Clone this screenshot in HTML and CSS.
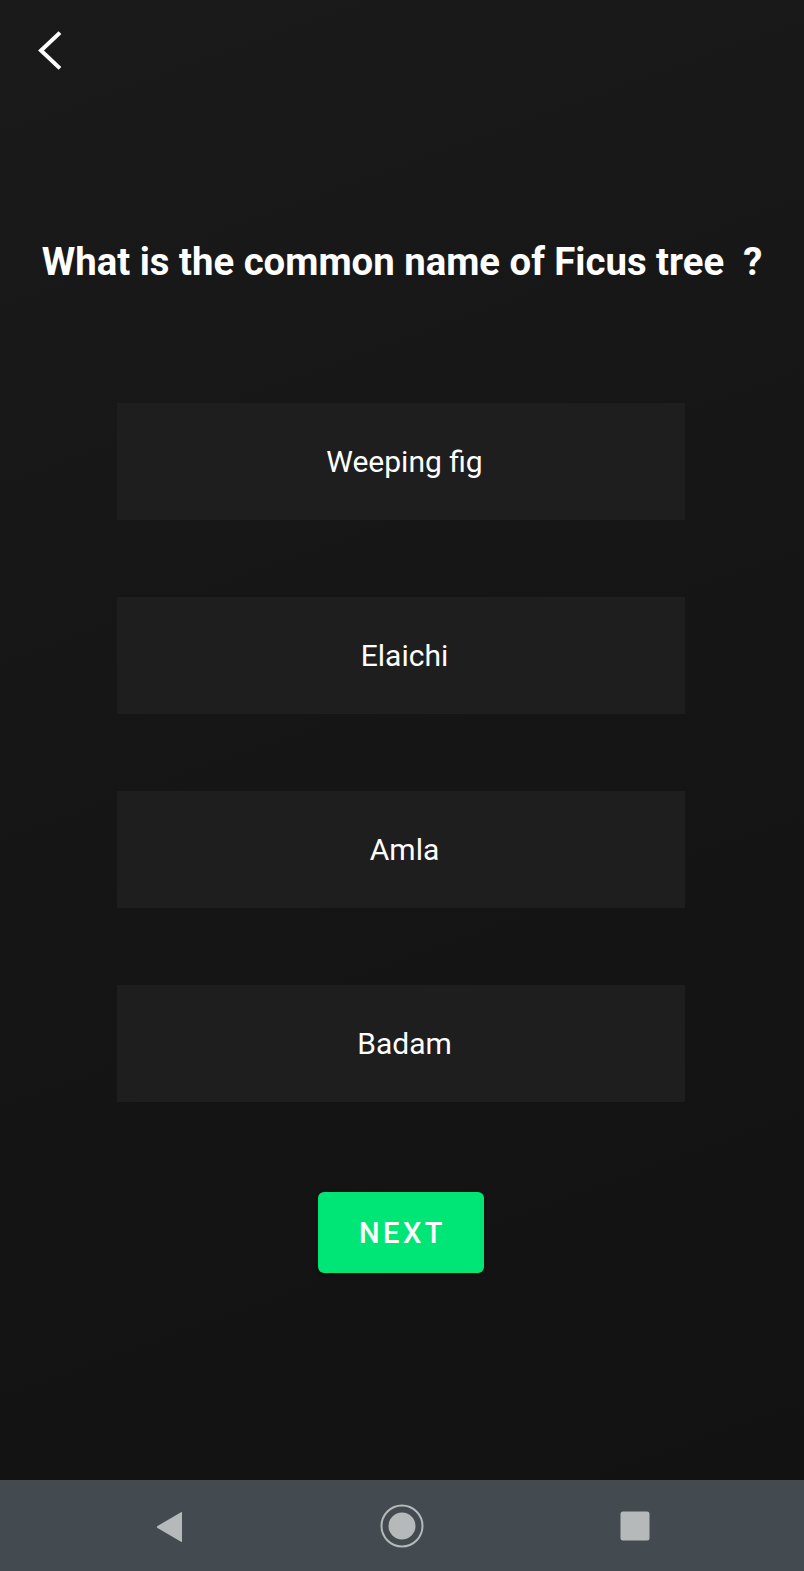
FILE: index.html
```html
<!DOCTYPE html>
<html>
<head>
<meta charset="utf-8">
<link rel="stylesheet" href="styles.css">
</head>
<body>
<div class="screen">
  <main class="content">
    <header class="topbar">
      <button class="back" aria-label="Back">
        <svg width="30" height="44" viewBox="0 0 30 44"><polyline points="20.5,4 3,20.5 20.5,37" fill="none" stroke="#fff" stroke-width="4" stroke-linecap="square" stroke-linejoin="miter"/></svg>
      </button>
    </header>
    <h1 class="question">What is the common name of Ficus tree&nbsp; ?</h1>
    <div class="options">
      <div class="option">Weeping fig</div>
      <div class="option">Elaichi</div>
      <div class="option">Amla</div>
      <div class="option">Badam</div>
    </div>
    <div class="actions">
      <button class="next">NEXT</button>
    </div>
  </main>
  <nav class="navbar">
    <svg class="nav-icon" width="30" height="32" viewBox="0 0 30 32"><path d="M27 1.5 L27 30.5 Q27 31.5 26 30.8 L2.5 17 Q1.2 16 2.5 15 L26 1.2 Q27 0.6 27 1.5 Z" fill="#b5b9ba"/></svg>
    <svg class="nav-icon" width="44" height="44" viewBox="0 0 44 44"><circle cx="22" cy="22" r="20.5" fill="none" stroke="#b5b9ba" stroke-width="2"/><circle cx="22" cy="22" r="13.5" fill="#b5b9ba"/></svg>
    <svg class="nav-icon" width="30" height="30" viewBox="0 0 30 30"><rect x="0.5" y="0.5" width="29" height="29" rx="2.5" fill="#b5b9ba"/></svg>
  </nav>
</div>
</body>
</html>
```

FILE: styles.css
```css
html, body {
  margin: 0;
  padding: 0;
}
body {
  width: 804px;
  height: 1571px;
  overflow: hidden;
  font-family: Roboto, "Liberation Sans", sans-serif;
  background: #161616;
}
.screen {
  display: flex;
  flex-direction: column;
  height: 1571px;
}
.content {
  flex: 1;
  display: flex;
  flex-direction: column;
  background: linear-gradient(160deg, #1a1a1a 0%, #151515 50%, #121212 100%);
}
.topbar {
  height: 104px;
  padding: 30px 0 0 38px;
  box-sizing: border-box;
}
.back {
  background: none;
  border: 0;
  padding: 0;
  margin: 0;
  display: block;
  cursor: pointer;
}
.question {
  margin: 136px 0 0 0;
  text-align: center;
  color: #fff;
  font-weight: 700;
  font-size: 38.3px;
  line-height: 44px;
  letter-spacing: 0;
}
.options {
  margin: 119px 0 0 117px;
  width: 568px;
  display: flex;
  flex-direction: column;
  gap: 77px;
}
.option {
  height: 117px;
  box-sizing: border-box;
  padding-left: 7px;
  background: #1e1e1e;
  color: #fff;
  font-size: 30px;
  display: flex;
  align-items: center;
  justify-content: center;
}
.actions {
  margin-top: 90px;
  display: flex;
  justify-content: center;
}
.next {
  width: 166px;
  height: 81px;
  margin-left: -2px;
  border: 0;
  border-radius: 6px;
  background: #00e676;
  color: #fff;
  font-family: Roboto, "Liberation Sans", sans-serif;
  font-weight: 500;
  font-size: 29px;
  letter-spacing: 3.5px;
  padding: 0 0 0 3px;
  box-shadow: 0 2px 3px rgba(0,0,0,0.35);
}
.navbar {
  height: 91px;
  flex: none;
  background: #434b51;
  display: flex;
  align-items: center;
  justify-content: center;
  gap: 0;
}
.nav-icon {
  display: block;
}
.navbar .nav-icon:nth-child(1) { margin-right: 195px; margin-top: 2px; }
.navbar .nav-icon:nth-child(2) { margin-right: 196px; }
.navbar .nav-icon:nth-child(3) { margin-top: 1px; }
```
